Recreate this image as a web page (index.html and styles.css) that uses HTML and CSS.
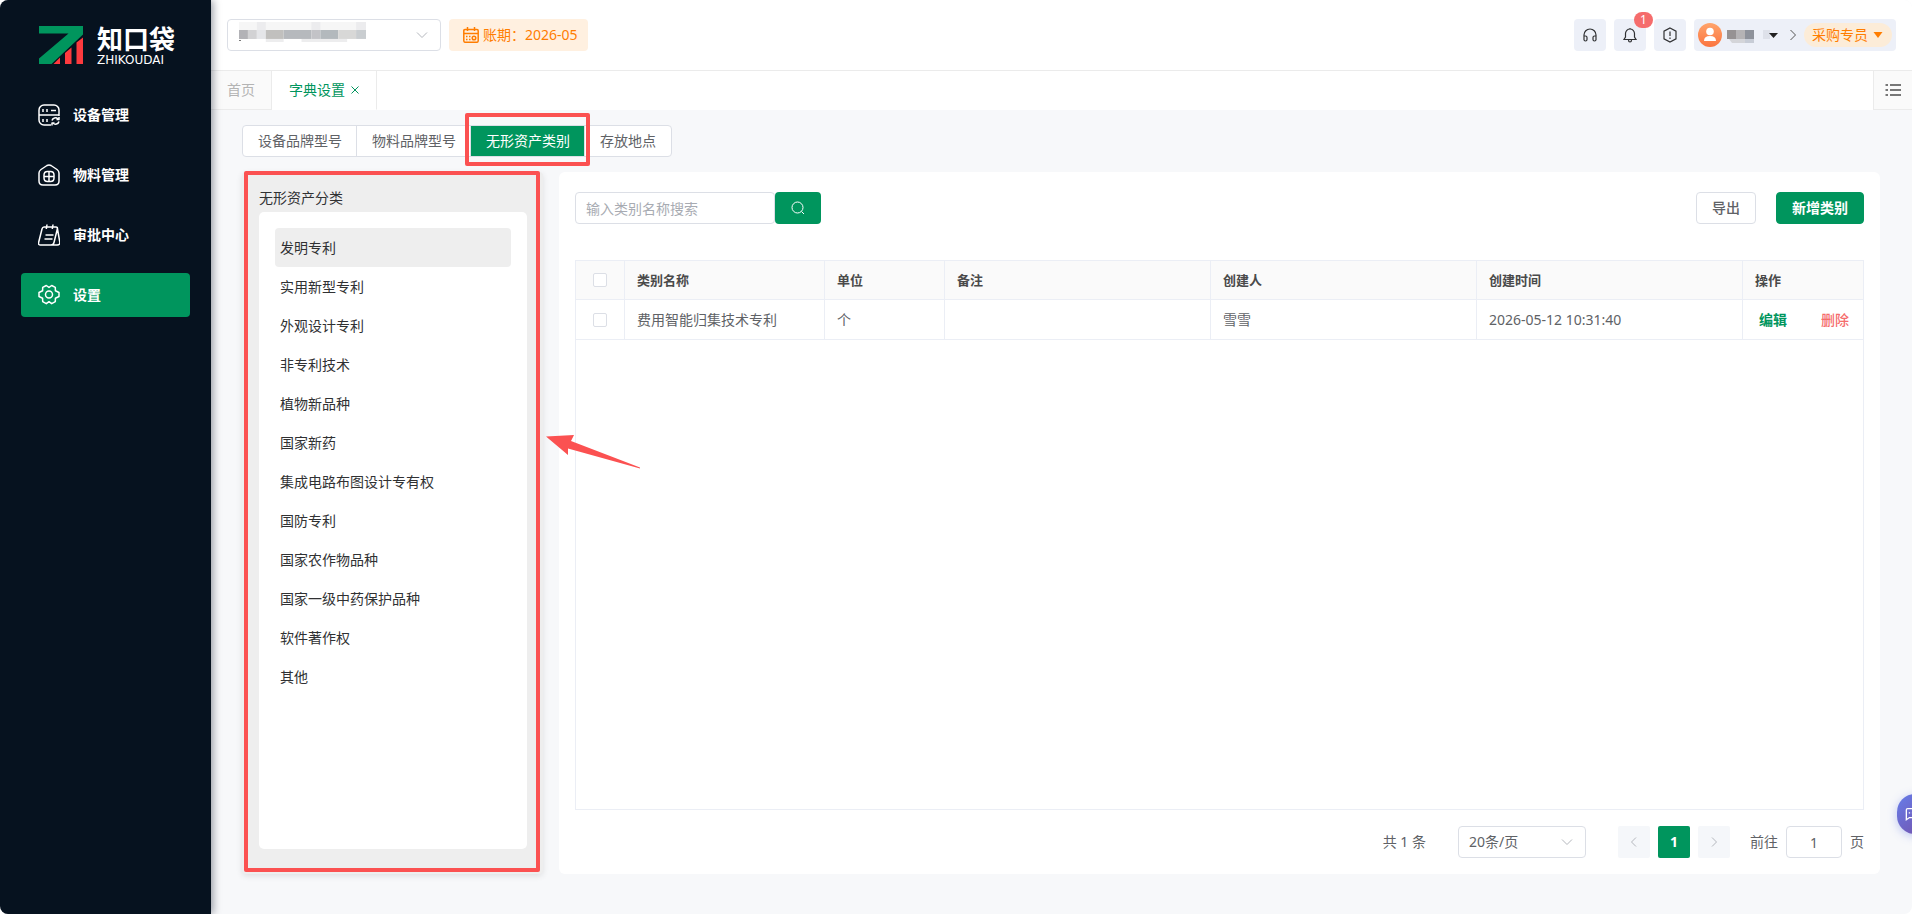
FILE: index.html
```html
<!DOCTYPE html>
<html lang="zh-CN">
<head>
<meta charset="utf-8">
<title>字典设置</title>
<link rel="stylesheet" href="styles.css">
</head>
<body>
<div class="app">
  <aside class="sidebar">
    <div class="logo">
      <svg class="logo-mark" viewBox="0 0 44 38" aria-hidden="true">
        <path fill="#00955d" d="M0 0H44V8.500L12.500 38H0V32.500L29.500 7.500H0Z"/>
        <path fill="#fd3a3e" d="M14.500 38 21 31.500V38ZM26 38V27L32.500 21.500V38ZM37.500 38V16.500L44 11.500V38Z"/>
      </svg>
      <div class="logo-words"><span class="logo-cn">知口袋</span><span class="logo-en">ZHIKOUDAI</span></div>
    </div>
    <nav class="menu">
      <a class="menu-item" href="#">
        <svg class="menu-icon" viewBox="0 0 22 22" aria-hidden="true"><path d="M13 21H6a5 5 0 0 1-5-5V6a5 5 0 0 1 5-5h10a5 5 0 0 1 5 5v6M1 11h20M5 5v3M9 5v3M13 6.500h5M5 15v3M9 15v3M14 16.500a3.500 3.500 0 0 1 6-1.500M21 13v2.500h-2.500M21 17.500a3.500 3.500 0 0 1-6 1.500M14 21.500V19h2.500"/></svg>设备管理</a>
      <a class="menu-item" href="#">
        <svg class="menu-icon" viewBox="0 0 22 22" aria-hidden="true"><path d="M9 1.500Q11 .3 13 1.500L19 5.500Q21 7 21 9v8q0 4-4 4H5q-4 0-4-4V9q0-2 2-3.500ZM9.500 7.500h3q3.500 0 3.500 3.500v3q0 3.500-3.500 3.500h-3Q6 17.500 6 14v-3q0-3.500 3.500-3.500ZM11 7.500v10M6 12.500h10"/></svg>物料管理</a>
      <a class="menu-item" href="#">
        <svg class="menu-icon" viewBox="0 0 22 22" aria-hidden="true"><path d="M6 3h12q1.700 0 1.400 1.800L16 18.500Q15.400 21 13 21H2.500Q0 21 .6 18.500L4 5Q4.500 3 6 3ZM9 .5 8.300 5M15 .5 14.300 5M7.500 11h8M6.500 15h8M19.500 5l2.300 13q.4 3-2.600 3H13"/></svg>审批中心</a>
      <a class="menu-item active" href="#">
        <svg class="menu-icon" viewBox="0 0 22 22" aria-hidden="true"><path d="M8.300 1.500 11 3.400l2.700-1.900 3.600 1.800.1 3.500 3.600 1.700v4l-3.600 1.700-.1 3.500-3.600 2-2.700-2-2.700 2-3.600-2-.1-3.500L1 12.500v-4l3.600-1.700.1-3.500Z"/><circle cx="11" cy="10.500" r="3.500"/></svg>设置</a>
    </nav>
  </aside>

  <div class="main">
    <header class="topbar">
      <div class="select-box company">
        <select aria-label="公司"><option></option></select>
        <svg class="mosaic" viewBox="0 0 128 20" aria-hidden="true">
          <path fill="#f6f6f6" d="M0 0h128v8H0z"/><path fill="#ececee" d="M18 0h9v8h-9zM73 0h9v8h-9zM118 0h10v8h-10z"/>
          <path fill="#b2b2b6" d="M0 8h9v9H0z"/><path fill="#d2d2d4" d="M9 8h9v9H9z"/><path fill="#e5e6e9" d="M18 8h9v9h-9z"/>
          <path fill="#c1c0be" d="M27 8h18v9H27z"/><path fill="#b6b9bd" d="M45 8h28v9H45z"/><path fill="#c3c3c7" d="M73 8h9v9h-9z"/>
          <path fill="#b3b9bd" d="M82 8h18v9H82z"/><path fill="#d8d8d7" d="M100 8h18v9h-18z"/><path fill="#c9cdd0" d="M118 8h10v9h-10z"/>
          <path fill="#ededee" d="M27 17h18v3H27zM63 17h46v3H63z"/><path fill="#777" d="M0 18h2v1H0z"/>
        </svg>
        <svg class="chevron" viewBox="0 0 12 12" aria-hidden="true"><path d="m1 3.500 5 5 5-5"/></svg>
      </div>
      <button class="period" type="button">
        <svg viewBox="0 0 16 16" aria-hidden="true"><path d="M2 2.500h12q1.200 0 1.200 1.200v10q0 1.600-1.600 1.600H2.400q-1.600 0-1.600-1.600v-10Q.8 2.500 2 2.500ZM1 6.500h14M4.500 0v4M11.500 0v4M3 9.500h1.500M6 9.500h1.500M3 12.500h1.500M6 12.500h1.500"/><circle cx="11" cy="11" r="1.800"/></svg>账期：2026-05</button>
      <div class="tools">
        <button class="tool" type="button" aria-label="客服"><svg viewBox="0 0 16 16"><path d="M2 13V8a6 6 0 0 1 12 0v5M2 9h1.500q1.500 0 1.500 1.500v2Q5 14 3.500 14T2 12.500ZM14 9h-1.500Q11 9 11 10.500v2q0 1.500 1.500 1.500t1.500-1.500Z"/></svg></button>
        <button class="tool" type="button" aria-label="通知"><svg viewBox="0 0 16 16"><path d="M8 1v1M8 2a4.500 4.500 0 0 1 4.500 4.500V10l1.500 2.500H2L3.500 10V6.500A4.500 4.500 0 0 1 8 2ZM6.500 13q0 2 1.500 2t1.500-2"/></svg><span class="badge">1</span></button>
        <button class="tool" type="button" aria-label="提示"><svg viewBox="0 0 16 16"><path d="m8 1 6 3.200v7.600L8 15l-6-3.200V4.200ZM8 4.500v4.500M8 10.500V12"/></svg></button>
        <div class="user">
          <svg class="avatar" viewBox="0 0 24 24" aria-hidden="true"><defs><linearGradient id="av" x1="0" y1="0" x2="0" y2="1"><stop offset="0" stop-color="#ffa46c"/><stop offset="1" stop-color="#fb743f"/></linearGradient></defs><circle cx="12" cy="12" r="12" fill="url(#av)"/><circle cx="12" cy="8.500" r="3.800" fill="#fff"/><path fill="#fff" d="M6 18q0-5 6-5t6 5Z"/></svg>
          <svg class="name-mosaic" viewBox="0 0 54 16" aria-hidden="true"><path fill="#969293" d="M0 3h9v9H0z"/><path fill="#b5b3b5" d="M9 3h9v9H9z"/><path fill="#8e929b" d="M18 3h9v9h-9z"/><path fill="#d4d5d9" d="M2 12h16v4H5z"/><path fill="#c7ccd6" d="M18 12h9v4h-9z"/><path fill="#dee1ea" d="M36 3h7v9h-7z"/><path fill="#222" d="M42 6h9l-4.500 5z"/></svg>
          <svg class="sep" viewBox="0 0 8 12" aria-hidden="true"><path d="m1.500 1 5 5-5 5"/></svg>
          <button class="role" type="button">采购专员<svg viewBox="0 0 10 6" aria-hidden="true"><path fill="#ff7d00" d="M.5 0h9L5 6Z"/></svg></button>
        </div>
      </div>
    </header>

    <div class="tabs">
      <a class="tab" href="#">首页</a>
      <a class="tab current" href="#">字典设置<svg viewBox="0 0 8 8" aria-hidden="true"><path d="m.5.5 7 7M7.500.5l-7 7"/></svg></a>
      <button class="tabs-more" type="button" aria-label="标签列表"><svg viewBox="0 0 16 14"><path d="M5 2h11M5 7h11M5 12h11M.5 2H3M.5 7H3M.5 12H3"/></svg></button>
    </div>

    <main class="content">
      <div class="segments">
        <button class="segment" type="button">设备品牌型号</button>
        <button class="segment" type="button">物料品牌型号</button>
        <button class="segment on" type="button">无形资产类别<span class="mark mark-tab"></span></button>
        <button class="segment" type="button">存放地点</button>
      </div>
      <div class="columns">
        <section class="category">
          <h2>无形资产分类</h2>
          <ul>
            <li class="chosen">发明专利</li>
            <li>实用新型专利</li>
            <li>外观设计专利</li>
            <li>非专利技术</li>
            <li>植物新品种</li>
            <li>国家新药</li>
            <li>集成电路布图设计专有权</li>
            <li>国防专利</li>
            <li>国家农作物品种</li>
            <li>国家一级中药保护品种</li>
            <li>软件著作权</li>
            <li>其他</li>
          </ul>
          <span class="mark mark-panel"></span>
          <svg class="arrow" viewBox="0 0 94 34" aria-hidden="true"><path fill="#fb5151" d="M0 1.500 28 0 25 6 94 32.500V33.500L22 13.500V20Z"/></svg>
        </section>

        <section class="panel">
          <div class="toolbar">
            <form class="search">
              <input type="text" placeholder="输入类别名称搜索" aria-label="输入类别名称搜索">
              <button type="button" aria-label="搜索"><svg viewBox="0 0 14 14"><circle cx="6.500" cy="6.500" r="5.500"/><path d="m10.500 10.500 2.500 2.500"/></svg></button>
            </form>
            <div class="actions">
              <button class="btn" type="button">导出</button>
              <button class="btn primary" type="button">新增类别</button>
            </div>
          </div>
          <div class="table-box">
            <table>
              <colgroup><col class="c-check"><col class="c-name"><col class="c-unit"><col><col><col><col class="c-ops"></colgroup>
              <thead><tr><th class="check"><input type="checkbox" aria-label="全选"></th><th>类别名称</th><th>单位</th><th>备注</th><th>创建人</th><th>创建时间</th><th>操作</th></tr></thead>
              <tbody><tr><td class="check"><input type="checkbox" aria-label="选择费用智能归集技术专利"></td><td>费用智能归集技术专利</td><td>个</td><td></td><td>雪雪</td><td>2026-05-12 10:31:40</td><td><div class="ops"><a class="edit" href="#">编辑</a><a class="remove" href="#">删除</a></div></td></tr></tbody>
            </table>
          </div>
          <div class="pager">
            <span>共 1 条</span>
            <div class="select-box size">
              <select aria-label="每页条数"><option>20条/页</option></select>
              <svg class="chevron" viewBox="0 0 12 12" aria-hidden="true"><path d="m1 3.500 5 5 5-5"/></svg>
            </div>
            <div class="pages">
              <button type="button" aria-label="上一页"><svg viewBox="0 0 12 12"><path d="m8 1.500-4.500 4.500 4.500 4.500"/></svg></button>
              <button class="now" type="button">1</button>
              <button type="button" aria-label="下一页"><svg viewBox="0 0 12 12"><path d="m4 1.500 4.500 4.500-4.500 4.500"/></svg></button>
            </div>
            <label class="jump">前往<input type="text" value="1">页</label>
          </div>
        </section>
      </div>
    </main>
  </div>
  <button class="assistant" type="button" aria-label="智能助手"><svg viewBox="0 0 18 18"><path d="M3 3h12q1.500 0 1.500 1.500v7q0 1.500-1.500 1.500H5l-3.500 2.500v-11Q1.500 3 3 3ZM5 7v1.500M8.500 7v1.500M12 7v1.500"/></svg></button>
</div>
</body>
</html>
```
FILE: styles.css
```css
* { box-sizing: border-box; }
body {
  margin: 0;
  background: #fff;
  color: #606266;
  font: 14px/20px "Noto Sans", "Noto Sans CJK SC", sans-serif;
}
button, input, select { font: inherit; color: inherit; margin: 0; }
button { border: 0; padding: 0; background: none; cursor: pointer; }
a { text-decoration: none; color: inherit; }
svg { display: block; flex: none; fill: none; }

.app {
  position: relative;
  display: flex;
  min-height: 100vh;
  overflow: hidden;
  border-radius: 8px;
  background: #f7f8fa;
}

/* Sidebar */
.sidebar {
  z-index: 1;
  flex: none;
  width: 211px;
  background: #06121f;
  box-shadow: 2px 0 8px rgba(0, 10, 30, .4);
  color: #fff;
}
.logo { display: flex; align-items: center; gap: 14px; height: 93px; padding: 0 0 3px 39px; }
.logo-mark { width: 44px; height: 38px; }
.logo-words { display: flex; flex-direction: column; white-space: nowrap; }
.logo-cn { font-family: "Noto Sans CJK SC", sans-serif; font-size: 26px; line-height: 30px; font-weight: 700; }
.logo-en { font-family: "DejaVu Sans", sans-serif; font-size: 12px; line-height: 14px; }
.menu { display: flex; flex-direction: column; gap: 16px; padding: 0 21px; }
.menu-item {
  display: flex;
  align-items: center;
  gap: 13px;
  height: 44px;
  padding-left: 17px;
  border-radius: 4px;
  font-weight: 700;
}
.menu-item.active { background: #00955d; }
.menu-icon { width: 22px; height: 22px; stroke: #fff; stroke-width: 1.500; stroke-linejoin: round; }

/* Header */
.main { flex: 1; min-width: 0; display: flex; flex-direction: column; }
.topbar {
  display: flex;
  align-items: center;
  gap: 8px;
  height: 70px;
  padding: 0 16px;
  background: #fff;
}
.select-box { position: relative; }
.select-box select {
  width: 100%;
  height: 32px;
  padding: 0 10px;
  border: 1px solid #dcdfe6;
  border-radius: 4px;
  background: #fff;
  appearance: none;
}
.company { width: 214px; }
.mosaic { position: absolute; left: 12px; top: 3px; width: 127px; height: 20px; }
.chevron { position: absolute; right: 13px; top: 10px; width: 12px; height: 12px; stroke: #b4b7bd; }
.period {
  display: flex;
  align-items: center;
  gap: 4px;
  height: 32px;
  padding: 0 10px 0 14px;
  border-radius: 4px;
  background: #fff0e0;
  color: #ff7d00;
}
.period svg { width: 16px; height: 16px; stroke: #ff7d00; stroke-width: 1.500; }
.tools { display: flex; gap: 8px; margin-left: auto; }
.tool {
  position: relative;
  display: grid;
  place-items: center;
  width: 32px;
  height: 32px;
  border-radius: 4px;
  background: #edf0f8;
}
.tool svg { width: 16px; height: 16px; stroke: #303133; stroke-width: 1.200; }
.badge {
  position: absolute;
  right: -7px;
  top: -7px;
  width: 19px;
  border-radius: 8px;
  background: #f56c6c;
  color: #fff;
  font-size: 12px;
  line-height: 16px;
}
.user {
  display: flex;
  align-items: center;
  height: 32px;
  padding: 0 4px;
  border-radius: 4px;
  background: #edf0f8;
}
.avatar { width: 24px; height: 24px; }
.name-mosaic { width: 54px; height: 16px; margin-left: 5px; }
.sep { width: 8px; height: 12px; margin: 0 7px 0 8px; stroke: #555; }
.role {
  display: flex;
  align-items: center;
  gap: 5px;
  height: 24px;
  padding: 0 9px 0 8px;
  border-radius: 12px;
  background: #fcecd8;
  color: #ff7d00;
}
.role svg { width: 10px; height: 6px; }

/* Page tabs */
.tabs { display: flex; height: 40px; border-top: 1px solid #ebebeb; background: #fff; }
.tab {
  display: flex;
  align-items: center;
  gap: 6px;
  padding: 0 16px;
  border-right: 1px solid #ebebeb;
  border-bottom: 1px solid #ebebeb;
  background: #fafafa;
  color: #b4b4b4;
}
.tab.current { padding: 0 17px; border-bottom-color: #fff; background: #fff; color: #00955d; }
.tab svg { width: 8px; height: 8px; stroke: #00955d; }
.tabs-more {
  display: grid;
  place-items: center;
  width: 39px;
  margin-left: auto;
  border-left: 1px solid #ebebeb;
  border-bottom: 1px solid #ebebeb;
  background: #fafafa;
}
.tabs-more svg { width: 16px; height: 14px; stroke: #777; stroke-width: 2; }

/* Content */
.content { flex: 1; display: flex; flex-direction: column; gap: 15px; padding: 15px 32px 40px 31px; }
.segments {
  display: flex;
  align-self: flex-start;
  height: 32px;
  border: 1px solid #dcdfe6;
  border-radius: 4px;
  background: #fff;
}
.segment { position: relative; padding: 0 15px; white-space: nowrap; }
.segment + .segment { box-shadow: -1px 0 0 #dcdfe6; }
.segment.on { background: #00955d; color: #fff; }
.mark { position: absolute; border: 4px solid #fb5151; border-radius: 2px; pointer-events: none; }
.mark-tab { z-index: 1; inset: -13px -5px -10px -6px; }
.mark-panel { inset: -1px 3px 2px 2px; }
.columns { flex: 1; display: flex; gap: 16px; }
.category {
  position: relative;
  display: flex;
  flex-direction: column;
  flex: none;
  width: 301px;
  padding: 16px 16px 25px 17px;
  border-radius: 4px;
  background: #eee;
  box-shadow: 0 2px 6px rgba(0, 0, 0, .1);
  color: #303133;
}
.category h2 { margin: 0 0 4px; font-size: 14px; line-height: 20px; font-weight: 400; }
.category ul {
  flex: 1;
  margin: 0;
  padding: 16px;
  border-radius: 5px;
  background: #fff;
  list-style: none;
}
.category li { padding: 0 5px; border-radius: 4px; line-height: 39px; }
.category .chosen { background: #eee; }
.arrow { position: absolute; z-index: 1; left: 304px; top: 263px; width: 94px; height: 34px; }
.panel {
  flex: 1;
  min-width: 0;
  display: flex;
  flex-direction: column;
  padding: 20px 16px 16px;
  border-radius: 6px;
  background: #fff;
}
.toolbar { display: flex; justify-content: space-between; margin-bottom: 36px; }
.search { display: flex; }
.search input {
  width: 200px;
  height: 32px;
  padding: 0 10px;
  border: 1px solid #dcdfe6;
  border-radius: 4px;
  outline: 0;
}
.search input::placeholder { color: #a8abb2; opacity: 1; }
.search button {
  display: grid;
  place-items: center;
  width: 46px;
  height: 32px;
  border-radius: 4px;
  background: #00955d;
}
.search svg { width: 14px; height: 14px; stroke: #fff; }
.actions { display: flex; gap: 20px; }
.btn {
  height: 32px;
  padding: 0 15px;
  border: 1px solid #dcdfe6;
  border-radius: 4px;
  background: #fff;
  font-weight: 500;
}
.btn.primary { border-color: #00955d; background: #00955d; color: #fff; font-weight: 700; }

/* Table */
.table-box { flex: 1; border: 1px solid #ebeef5; }
table { width: 100%; border-collapse: separate; border-spacing: 0; table-layout: fixed; }
.c-check { width: 49px; }
.c-name { width: 200px; }
.c-unit { width: 120px; }
.c-ops { width: 120px; }
th, td {
  height: 40px;
  padding: 0 12px;
  border-right: 1px solid #ebeef5;
  border-bottom: 1px solid #ebeef5;
  text-align: left;
  font-weight: 400;
}
th:last-child, td:last-child { border-right: 0; }
th { height: 39px; background: #fafafa; color: #4a4a4a; font-size: 13px; font-weight: 700; }
.check { padding: 0; text-align: center; }
.check input {
  display: block;
  width: 14px;
  height: 14px;
  margin: 0 auto;
  border: 1px solid #dcdfe6;
  border-radius: 2px;
  background: #fff;
  appearance: none;
}
.ops { display: flex; justify-content: space-between; padding: 0 2px 0 4px; font-weight: 700; }
.edit { color: #00955d; }
.remove { color: #f56c6c; font-weight: 500; }

/* Pagination */
.pager { display: flex; justify-content: flex-end; align-items: center; margin-top: 16px; }
.size { width: 128px; margin: 0 32px; }
.pages { display: flex; gap: 8px; margin-right: 20px; }
.pages button {
  display: grid;
  place-items: center;
  width: 32px;
  height: 32px;
  border-radius: 2px;
  background: #f5f7fa;
}
.pages .now { background: #00955d; color: #fff; font-weight: 700; }
.pages svg { width: 12px; height: 12px; stroke: #b4b7bd; }
.jump { display: flex; align-items: center; gap: 8px; }
.jump input {
  width: 56px;
  height: 32px;
  padding: 0;
  border: 1px solid #dcdfe6;
  border-radius: 4px;
  text-align: center;
}

/* Floating assistant, tucked into the right edge */
.assistant {
  position: absolute;
  right: -25px;
  bottom: 80px;
  width: 40px;
  height: 40px;
  padding-left: 8px;
  border-radius: 18px;
  background: linear-gradient(135deg, #667eea, #764ba2);
  box-shadow: 0 2px 10px rgba(102, 126, 234, .4);
}
.assistant svg { width: 16px; height: 16px; stroke: #fff; stroke-width: 1.500; }
```
